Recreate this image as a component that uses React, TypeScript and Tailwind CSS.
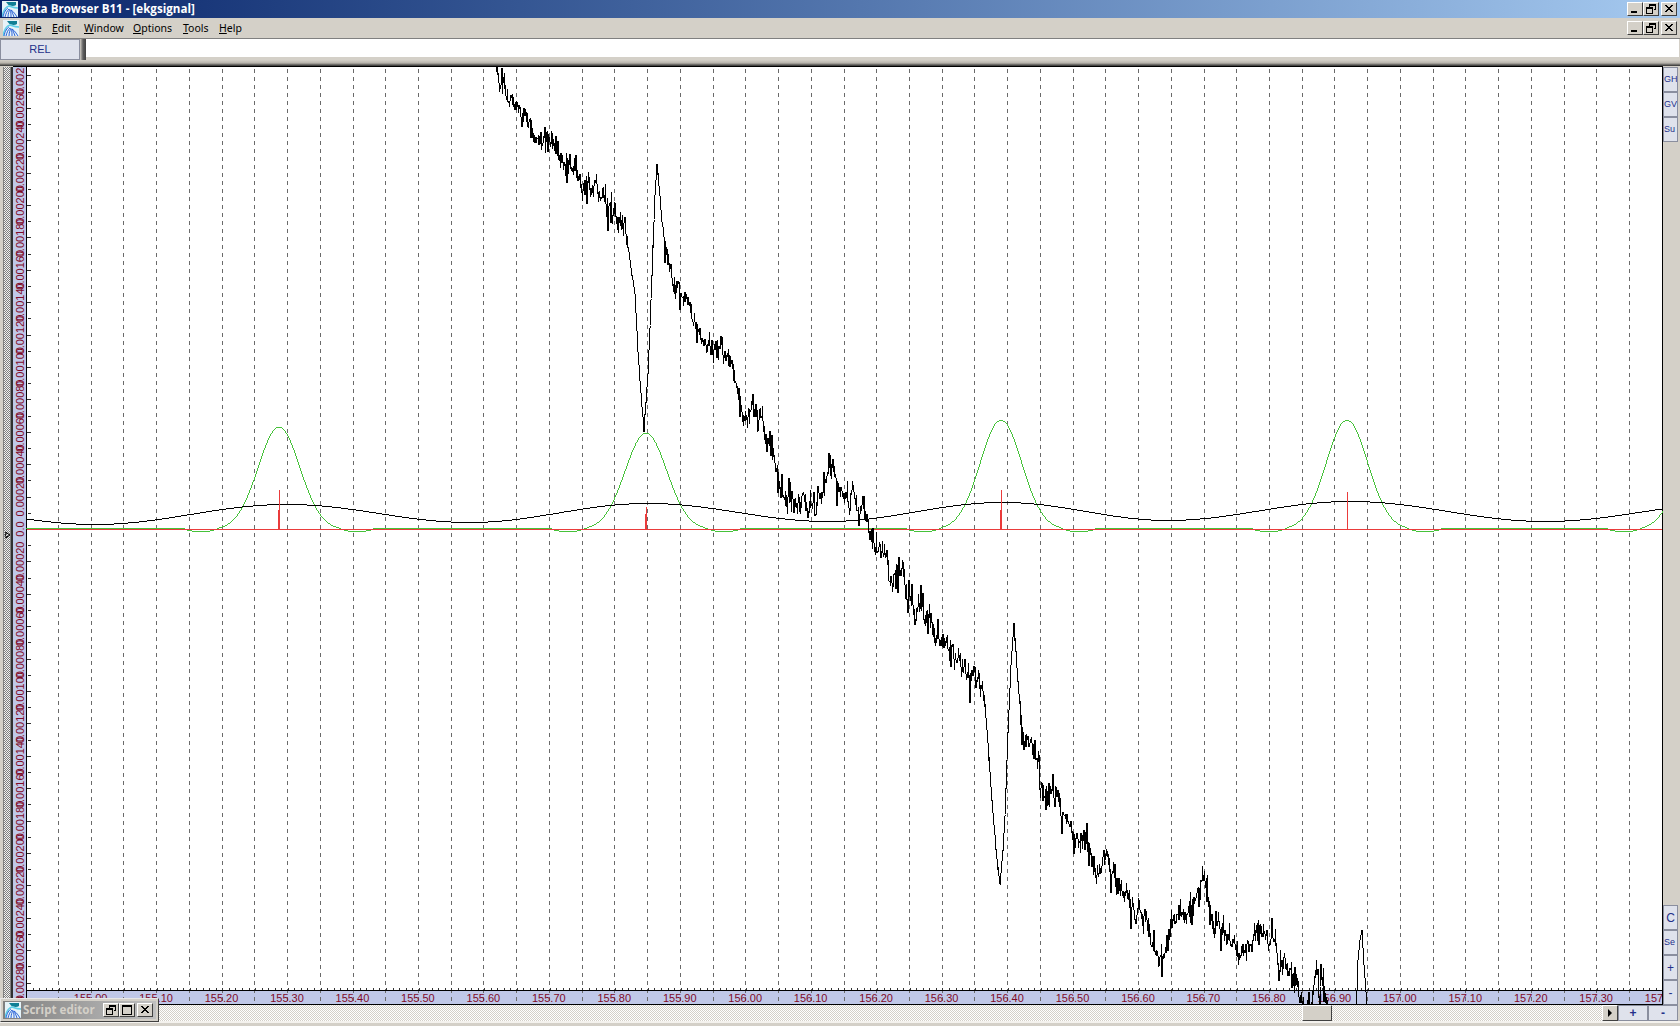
import React from "react";

const KEY: [number, number][] = [
  [494,60],[499,70],[508,88],[515,100],[522,112],[530,125],[538,134],[545,140],[550,152],[560,158],[570,163],[576,178],[582,190],[594,190],[605,192],[612,212],[620,222],[627,237],[630,262],[635,293],[638,353],[641,395],[644,428],[646,400],[648,372],[650,327],[653,247],[655,195],[657,163],[660,195],[662,220],[667,247],[675,290],[687,298],[697,340],[713,352],[722,345],[733,367],[743,405],[752,410],[763,425],[773,445],[778,470],[782,490],[797,505],[813,508],[822,495],[830,472],[843,500],[853,498],[867,523],[873,540],[882,548],[887,556],[889,580],[900,568],[907,597],[927,615],[943,640],[960,663],[977,680],[984,700],[988,743],[992,800],[996,850],[1000,884],[1003,850],[1005,817],[1008,733],[1011,665],[1014,623],[1018,683],[1022,733],[1035,763],[1045,800],[1060,800],[1073,843],[1083,825],[1095,867],[1108,857],[1117,883],[1133,910],[1147,930],[1160,962],[1170,925],[1180,920],[1190,912],[1202,880],[1213,920],[1233,933],[1240,958],[1250,952],[1258,925],[1266,950],[1273,948],[1285,972],[1297,984],[1302,1000],[1306,1015],[1310,1005],[1316,985],[1319,1010],[1322,985],[1326,995],[1330,1022],[1356,1022],[1358,960],[1360,940],[1362,930],[1364,965],[1367,1005],[1370,1030],
];

function lerp(x: number) {
  for (let i = 0; i < KEY.length - 1; i++) {
    if (x >= KEY[i][0] && x <= KEY[i + 1][0]) {
      const t = (x - KEY[i][0]) / (KEY[i + 1][0] - KEY[i][0]);
      return KEY[i][1] + t * (KEY[i + 1][1] - KEY[i][1]);
    }
  }
  return 1100;
}

function ampAt(x: number) {
  if (x > 628 && x < 664) return 0.15;
  if (x > 984 && x < 1020) return 0.15;
  if (x > 1330) return 0;
  return 1;
}

function buildSignal() {
  let seed = 12345;
  const rnd = () => {
    seed = (seed * 1664525 + 1013904223) >>> 0;
    return seed / 4294967296;
  };
  const pts: string[] = [];
  let walk = 0;
  for (let x = 494; x <= 1370; x += 1) {
    const a = ampAt(x);
    walk = walk * 0.65 + (rnd() - 0.5) * 17 * a;
    const spike = rnd() < 0.25 ? (rnd() - 0.5) * 44 * a : 0;
    pts.push(`${x},${Math.round(lerp(x) + walk + spike)}`);
    const w2 = (rnd() - 0.5) * 22 * a;
    pts.push(`${x},${Math.round(lerp(x) + walk + w2)}`);
  }
  return pts.join(" ");
}

const PEAKS: [number, number][] = [[279, 102], [646, 96], [1001, 109], [1347, 109], [1702, 105]];

function buildGreen() {
  const pts: string[] = [];
  for (let x = 26; x <= 1663; x += 1) {
    let best = PEAKS[0];
    for (const p of PEAKS) if (Math.abs(p[0] - x) < Math.abs(best[0] - x)) best = p;
    const d = Math.abs(x - best[0]);
    let v = best[1] * Math.exp(-((d / 29.4) ** 2));
    if (d >= 58 && d < 95) v -= 2.5 * Math.sin(((d - 58) / 37) * Math.PI);
    if (d >= 95) v += 1;
    pts.push(`${x},${Math.round(529 - v)}`);
  }
  return pts.join(" ");
}

const EXT: [number, number][] = [[-100, 504], [95, 524], [287, 504], [470, 522], [648, 503], [828, 521], [1003, 502], [1168, 520], [1350, 501], [1545, 521], [1740, 502]];

function buildBlack() {
  const pts: string[] = [];
  for (let x = 26; x <= 1663; x += 1) {
    let y = 520;
    for (let i = 0; i < EXT.length - 1; i++) {
      if (x >= EXT[i][0] && x <= EXT[i + 1][0]) {
        const t = (x - EXT[i][0]) / (EXT[i + 1][0] - EXT[i][0]);
        y = EXT[i][1] + ((1 - Math.cos(t * Math.PI)) / 2) * (EXT[i + 1][1] - EXT[i][1]);
      }
    }
    pts.push(`${x},${Math.round(y)}`);
  }
  return pts.join(" ");
}

const gridX = Array.from({ length: 49 }, (_, i) => Math.round(58 + i * 32.73));
const xLabels = Array.from({ length: 25 }, (_, i) => ({ x: 90.6 + i * 65.46, t: (155 + i * 0.1).toFixed(2) }));
const xTicks = Array.from({ length: 250 }, (_, i) => Math.round(26 + i * 6.546));
const yTicks = Array.from({ length: 60 }, (_, i) => i - 30).map((k) => ({ k, y: 529 + k * 16.2 }));

function Logo() {
  return (
    <svg width="16" height="16" viewBox="0 0 16 16" className="shrink-0">
      <rect width="16" height="16" fill="#e6f3f8" />
      <path d="M4 1h10v3c-2 1.500-6 1.200-8-.5z" fill="#0f7f95" />
      <path d="M0 16C1 10 3 6 7 5c3 1 5 2 9 2" fill="none" stroke="#5fd0e8" strokeWidth="1.500" />
      <path d="M1 16C2 11 4 8 6 7M3 16c1-4 2-6 4-8M6 16c0-3 1-6 2-8M9 16c0-3 0-5-1-7M12 16c-1-3-2-5-3-7M15 16c-2-3-3-5-6-7" fill="none" stroke="#2a62d8" strokeWidth="1" />
    </svg>
  );
}

function WinBtn({ kind, w = "w-[16px]" }: { kind: "min" | "restore" | "close" | "max"; w?: string }) {
  return (
    <div className={`${w} h-[14px] bg-[#d4d0c8] border border-t-white border-l-white border-b-[#404040] border-r-[#404040] flex items-center justify-center shrink-0`}>
      <svg width="12" height="10" viewBox="0 0 12 10" fill="none" stroke="#000" shapeRendering="crispEdges">
        {kind === "min" && <rect x="2" y="7" width="6" height="2" fill="#000" stroke="none" />}
        {kind === "restore" && (
          <g strokeWidth="1">
            <path d="M4.500 2.500V.5h6v5H8.500" />
            <path d="M4.500 1.500h6" />
            <rect x="1.500" y="3.500" width="6" height="5.500" />
            <path d="M1.500 4.500h6" />
          </g>
        )}
        {kind === "max" && (
          <g strokeWidth="1">
            <rect x="1.500" y=".5" width="9" height="8.500" />
            <path d="M1.500 1.500h9" />
          </g>
        )}
        {kind === "close" && <path d="M2 1l7 7M3 1l7 7M9 1L2 8M10 1L3 8" shapeRendering="geometricPrecision" strokeWidth="1" />}
      </svg>
    </div>
  );
}

function SideBtn({ label, center }: { label: string; center?: boolean }) {
  return (
    <div className={`h-[25px] w-[15px] bg-[#dfe2ec] border border-[#8a8e9e] flex items-center overflow-hidden text-[#24308a] font-['Liberation_Sans',Arial,sans-serif] ${center ? "justify-center text-[12px]" : "justify-start text-[9px]"} leading-none whitespace-nowrap`}>
      {label}
    </div>
  );
}

function Chart() {
  const signal = React.useMemo(buildSignal, []);
  const green = React.useMemo(buildGreen, []);
  const black = React.useMemo(buildBlack, []);
  return (
    <svg className="block flex-1 min-w-0 h-full bg-white" viewBox="13 66 1650 939" width="1650" height="939">
      <rect x="13" y="66" width="13" height="939" fill="#c0c8e8" />
      <rect x="26" y="991" width="1637" height="13" fill="#c0c8e8" />
      {gridX.map((x) => (
        <line key={x} x1={x + 0.5} x2={x + 0.5} y1="69" y2="1004" stroke="#6a6a6a" strokeDasharray="4 4" shapeRendering="crispEdges" />
      ))}
      {yTicks.map(({ k, y }) => {
        const major = k % 2 === 0;
        return <line key={k} x1={major ? 26 : 28} x2="31" y1={Math.round(y) + 0.5} y2={Math.round(y) + 0.5} stroke="#333" shapeRendering="crispEdges" />;
      })}
      {xTicks.map((x) => (
        <line key={x} x1={x + 0.5} x2={x + 0.5} y1="988" y2="991" stroke="#333" shapeRendering="crispEdges" />
      ))}
      {Array.from({ length: 15 }, (_, i) => i).map((k) => {
        const y = 529 - k * 32.4;
        const t = k === 0 ? "0.0" : (k * 0.0002).toFixed(5);
        return (
          <text key={`u${k}`} transform={`translate(24 ${y}) rotate(-90)`} textAnchor="middle" className="fill-[#7f0a28] text-[11px] font-['Liberation_Sans',Arial,sans-serif]">
            {t}
          </text>
        );
      })}
      {Array.from({ length: 15 }, (_, i) => i + 1).map((k) => {
        const y = 529 + k * 32.4;
        return (
          <text key={`d${k}`} transform={`translate(24 ${y}) rotate(-90)`} textAnchor="middle" className="fill-[#7f0a28] text-[11px] font-['Liberation_Sans',Arial,sans-serif]">
            {(k * 0.0002).toFixed(5)}
          </text>
        );
      })}
      {xLabels.map((l) => (
        <text key={l.t} x={l.x} y="1002" textAnchor="middle" className="fill-[#7f0a28] text-[11px] font-['Liberation_Sans',Arial,sans-serif]">
          {l.t}
        </text>
      ))}
      <line x1="26.500" x2="26.500" y1="66" y2="1004" stroke="#000" shapeRendering="crispEdges" />
      <line x1="13" x2="1663" y1="66.500" y2="66.500" stroke="#000" shapeRendering="crispEdges" />
      <line x1="26" x2="1663" y1="990.500" y2="990.500" stroke="#000" shapeRendering="crispEdges" />
      <line x1="13" x2="1663" y1="1004.500" y2="1004.500" stroke="#000" shapeRendering="crispEdges" />
      <line x1="1662.500" x2="1662.500" y1="66" y2="1005" stroke="#000" shapeRendering="crispEdges" />
      <polyline points={green} fill="none" stroke="#46c23a" shapeRendering="crispEdges" />
      <polyline points={black} fill="none" stroke="#000" shapeRendering="crispEdges" />
      <line x1="27" x2="1662" y1="529.500" y2="529.500" stroke="#ea3b3b" shapeRendering="crispEdges" />
      <rect x="279" y="490" width="1" height="39" fill="#ea3b3b" />
      <rect x="278" y="510" width="1" height="19" fill="#ea3b3b" />
      <rect x="646" y="507" width="1" height="22" fill="#ea3b3b" />
      <rect x="645" y="514" width="1" height="15" fill="#ea3b3b" />
      <rect x="1001" y="490" width="1" height="39" fill="#ea3b3b" />
      <rect x="1000" y="510" width="1" height="19" fill="#ea3b3b" />
      <rect x="1347" y="492" width="1" height="37" fill="#ea3b3b" />
      <polyline points={signal} fill="none" stroke="#000" shapeRendering="crispEdges" />
    </svg>
  );
}

export default function App() {
  return (
    <div className="relative w-[1680px] h-[1026px] overflow-hidden bg-[#d4d0c8] flex flex-col font-['Noto_Sans',sans-serif]">
      {/* title bar */}
      <div className="h-[18px] shrink-0 flex items-center pl-[2px] pr-[3px] bg-gradient-to-r from-[#0a246a] to-[#a6caf0]">
        <Logo />
        <span className="ml-[2px] -mt-[1px] text-white font-bold text-[11.600px] leading-none whitespace-nowrap font-['Open_Sans',sans-serif]">Data Browser B11 - [ekgsignal]</span>
        <div className="ml-auto flex">
          <WinBtn kind="min" />
          <WinBtn kind="restore" />
          <div className="w-[2px]" />
          <WinBtn kind="close" />
        </div>
      </div>
      {/* menu bar */}
      <div className="h-[20px] shrink-0 flex items-center pl-[3px] pr-[3px] text-[10.500px] text-black">
        <Logo />
        <div className="ml-[6px] flex whitespace-nowrap leading-none">
          {["File", "Edit", "Window", "Options", "Tools", "Help"].map((m, i) => (
            <span key={m} className={["w-[27px]", "w-[32px]", "w-[49px]", "w-[50px]", "w-[36px]", "w-[30px]"][i]}>
              <span className="underline">{m[0]}</span>
              {m.slice(1)}
            </span>
          ))}
        </div>
        <div className="ml-auto flex">
          <WinBtn kind="min" />
          <WinBtn kind="restore" />
          <div className="w-[2px]" />
          <WinBtn kind="close" />
        </div>
      </div>
      {/* toolbar */}
      <div className="h-[22px] shrink-0 flex border-t border-[#808080]">
        <div className="w-[80px] h-[21px] bg-[#dfe2ec] border border-[#8a8e9e] flex items-center justify-center text-[#24308a] text-[11px] font-['Liberation_Sans',Arial,sans-serif]">REL</div>
        <div className="w-[6px] h-[21px] bg-gradient-to-r from-[#d4d0c8] via-[#606060] to-[#404040]" />
        <div className="flex-1 h-[20px] bg-white border-b-2 border-[#d4d0c8]" />
        <div className="w-[1px]" />
      </div>
      {/* splitter */}
      <div className="h-[6px] shrink-0 bg-gradient-to-b from-[#d4d0c8] via-[#b8b4ac] to-[#303030]" />
      {/* main */}
      <div className="h-[939px] shrink-0 flex">
        <div className="w-[13px] shrink-0 flex pt-[1px]">
          <div className="w-[3px]" />
          <div className="relative w-[8px] h-full border-x border-[#808080] bg-[repeating-conic-gradient(#808080_0_25%,#f0f0f0_0_50%)] bg-[length:2px_2px]">
            <svg className="absolute left-0 top-[464px]" width="8" height="8" viewBox="0 0 8 8" fill="none" stroke="#000"><path d="M1 1l5 3-5 3M3 1l-2 3 2 3" /></svg>
          </div>
          <div className="w-[2px] bg-[#303030]" />
        </div>
        <Chart />
        <div className="w-[17px] shrink-0 flex flex-col justify-between pt-[1px]">
          <div className="flex flex-col">
            <SideBtn label="GH" />
            <SideBtn label="GV" />
            <SideBtn label="Su" />
          </div>
          <div className="flex flex-col">
            <SideBtn label="C" center />
            <SideBtn label="Se" />
            <SideBtn label="+" center />
            <SideBtn label="-" center />
          </div>
        </div>
      </div>
      {/* scroll row */}
      <div className="h-[16px] shrink-0 flex">
        <div className="flex-1 bg-[repeating-conic-gradient(#d4d0c8_0_25%,#fff_0_50%)] bg-[length:2px_2px]">
          <div className="ml-[1302px] w-[30px] h-[16px] bg-[#d4d0c8] border border-t-white border-l-white border-b-[#404040] border-r-[#404040]" />
        </div>
        <div className="w-[16px] h-[16px] bg-[#d4d0c8] border border-t-white border-l-white border-b-[#404040] border-r-[#404040] flex items-center justify-center">
          <svg width="4" height="8" viewBox="0 0 4 8"><path d="M0 0l4 4-4 4z" fill="#000" /></svg>
        </div>
        <div className="w-[30px] h-[16px] bg-[#dfe2ec] border border-[#8a8e9e] flex items-center justify-center text-[#24308a] text-[12px] font-bold leading-none font-['Liberation_Sans',Arial,sans-serif]">+</div>
        <div className="w-[30px] h-[16px] bg-[#dfe2ec] border border-[#8a8e9e] flex items-center justify-center text-[#24308a] text-[12px] font-bold leading-none font-['Liberation_Sans',Arial,sans-serif]">-</div>
        <div className="w-[2px]" />
      </div>
      {/* status strip */}
      <div className="flex-1 border-t-2 border-[#f4f2ee]" />
      {/* minimized script editor */}
      <div className="absolute left-0 top-[998px] w-[159px] h-[24px] bg-[#d4d0c8] border border-t-[#e8e8e8] border-l-[#e8e8e8] border-b-[#404040] border-r-[#404040] p-[2px]">
        <div className="h-full flex items-center pl-[2px] pr-[3px] bg-gradient-to-r from-[#808080] to-[#c0c0c0]">
          <Logo />
          <span className="ml-[2px] text-[#d4d0c8] font-bold text-[11.600px] leading-none whitespace-nowrap font-['Open_Sans',sans-serif]">Script editor</span>
          <div className="ml-auto flex">
            <WinBtn kind="restore" />
            <WinBtn kind="max" />
            <div className="w-[2px]" />
            <WinBtn kind="close" />
          </div>
        </div>
      </div>
    </div>
  );
}
